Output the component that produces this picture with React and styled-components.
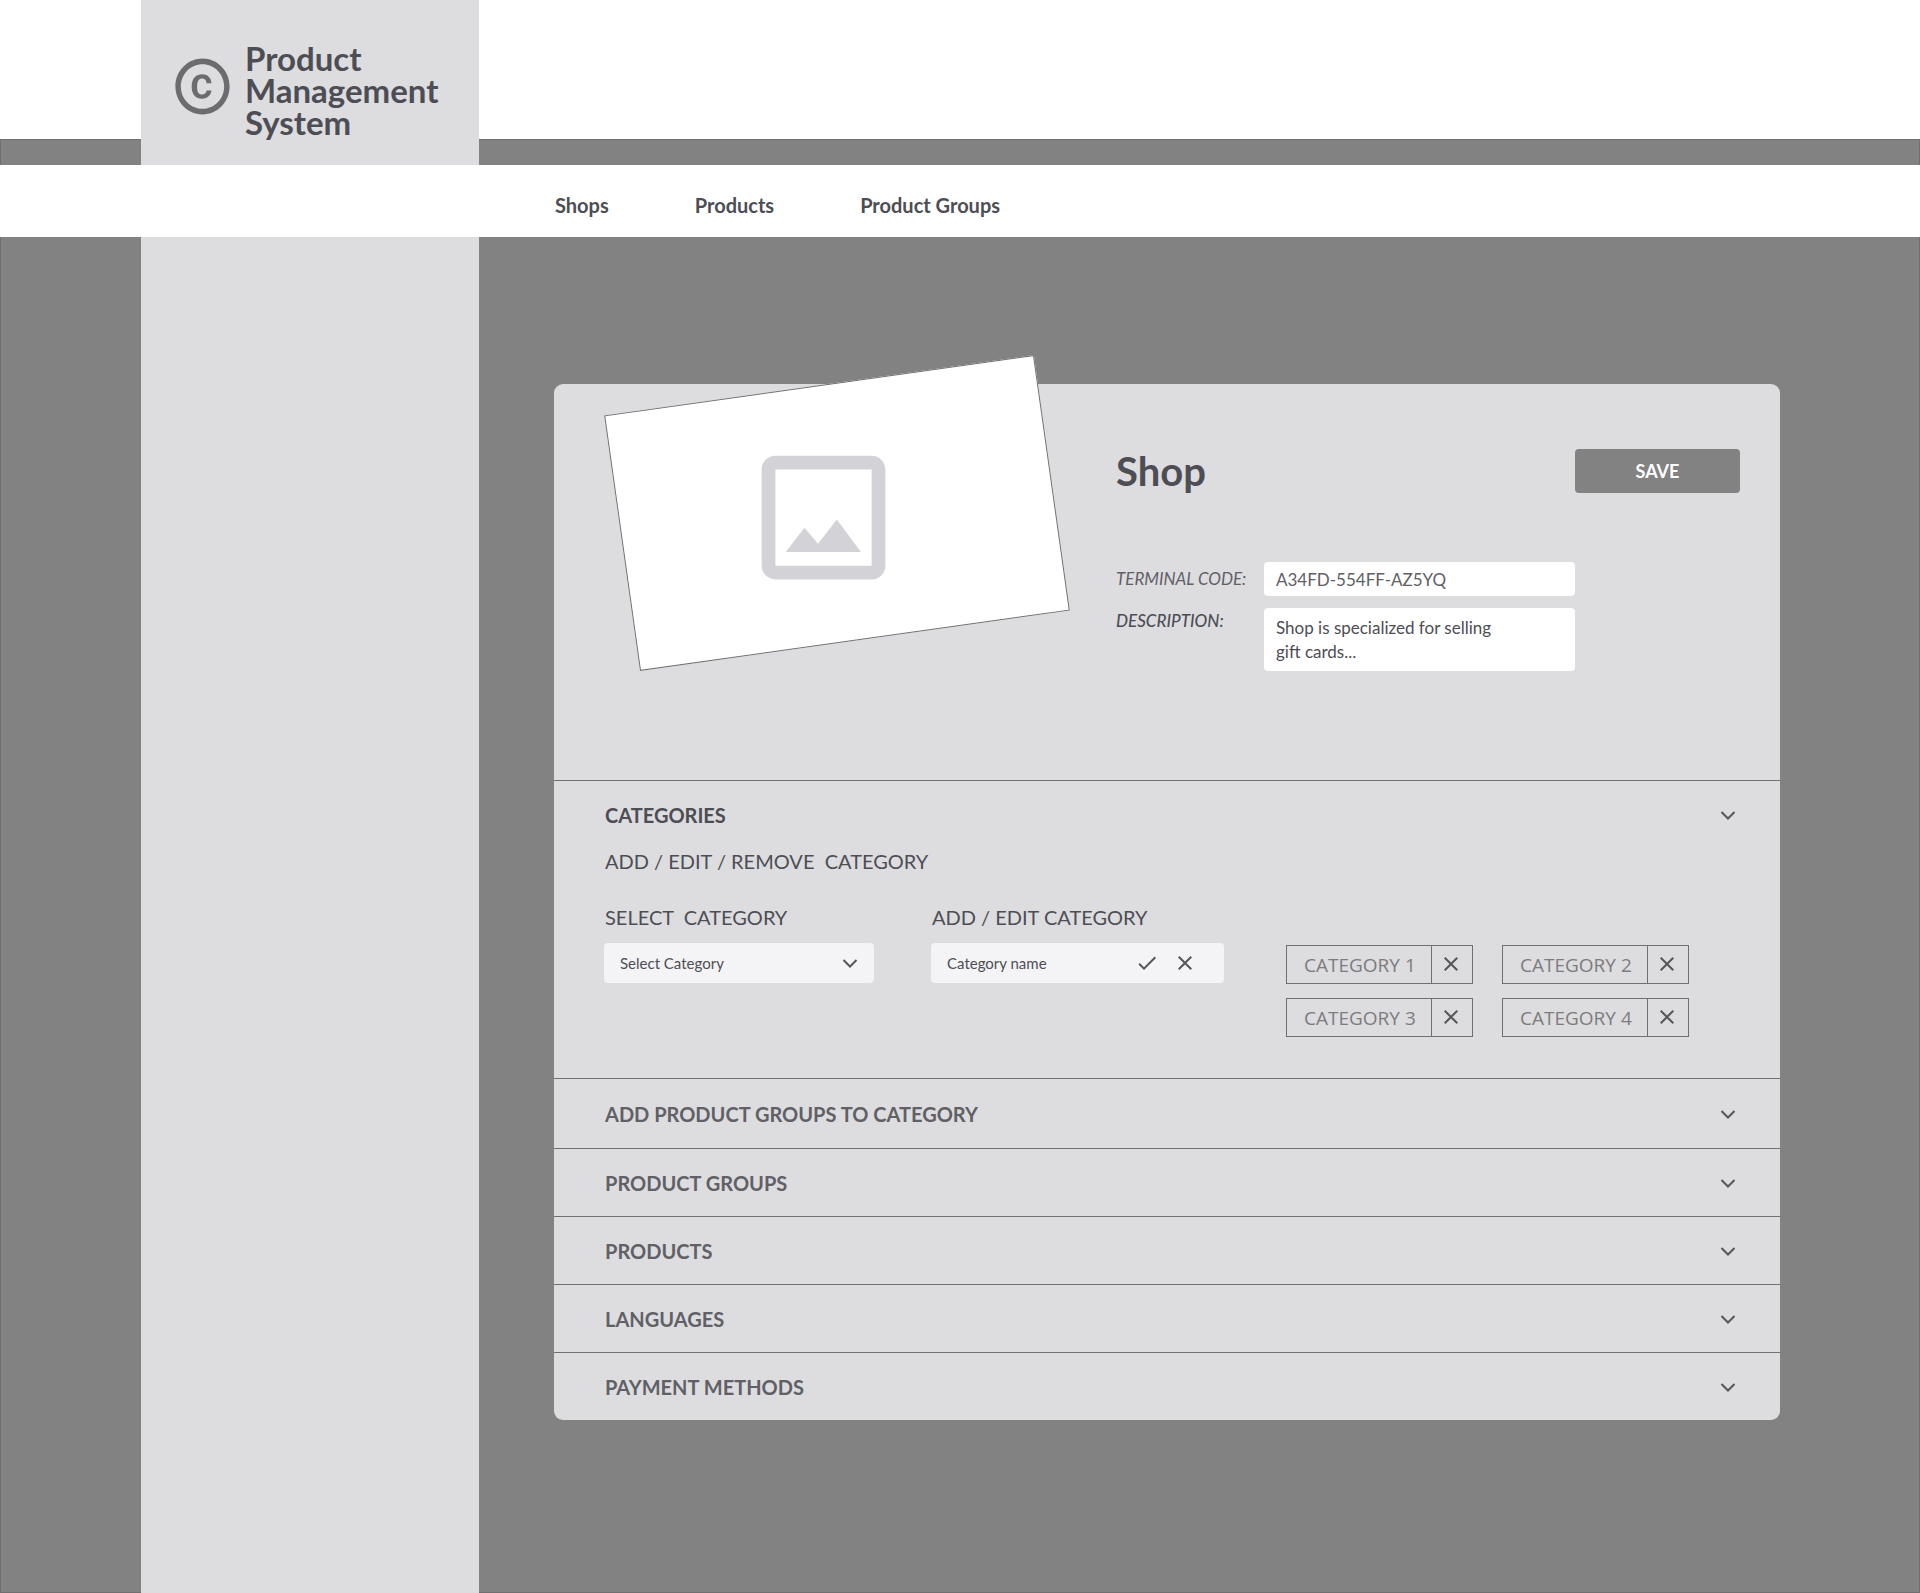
import React from "react";
import styled, { createGlobalStyle } from "styled-components";
import { MdCheck, MdClose, MdCopyright } from "react-icons/md";

const ink = "#4d4d55";
const muted = "#606066";
const line = "#707073";
const surface = "#dddddf";
const backdrop = "#828282";

const GlobalStyle = createGlobalStyle`
  *, *::before, *::after { box-sizing: border-box; }
  body {
    margin: 0;
    background: #fff;
    color: ${ink};
    font-family: Lato, "Liberation Sans", sans-serif;
  }
  button, input, textarea, select { font: inherit; color: inherit; }
  h1, h2, h3, p { margin: 0; }
`;

const Page = styled.div`
  display: grid;
  grid-template-columns: 141px 338px minmax(0, 1fr);
  grid-template-rows: 139px 26px 72px 1fr;
  min-height: 100vh;
`;

const Backdrop = styled.div`
  grid-area: 2 / 1 / 5 / 4;
  background: ${backdrop};
  border: 1px solid #707070;
`;

const Sidebar = styled.aside`
  grid-area: 1 / 2 / 5 / 3;
  background: ${surface};
  z-index: 1;
`;

const Brand = styled.a`
  display: flex;
  align-items: center;
  gap: 10px;
  padding: 42px 0 0 29px;
  color: ${ink};
  text-decoration: none;
`;

const BrandMark = styled(MdCopyright)`
  flex: none;
  width: 65px;
  height: 67px;
  margin-bottom: 8px;
  color: #6b6b70;
`;

const BrandName = styled.span`
  width: 200px;
  font-size: 33px;
  line-height: 32px;
  font-weight: 700;
`;

const NavBar = styled.nav`
  grid-area: 3 / 1 / 4 / 4;
  z-index: 2;
  display: flex;
  align-items: center;
  gap: 86px;
  padding: 8px 0 0 555px;
  background: #fff;
`;

const NavLink = styled.a`
  color: ${ink};
  font-size: 20px;
  line-height: 24px;
  font-weight: 700;
  text-decoration: none;
`;

const Main = styled.main`
  grid-area: 4 / 3 / 5 / 4;
  z-index: 1;
  padding: 147px 140px 173px 75px;
`;

const Card = styled.article`
  background: ${surface};
  border-radius: 9px;
`;

const CardHeader = styled.header`
  display: flex;
  align-items: flex-start;
  gap: 62px;
  height: 396px;
  padding: 0 40px 0 66px;
`;

const Photo = styled.div`
  flex: none;
  display: grid;
  width: 434px;
  height: 258px;
`;

const PhotoPaper = styled.div`
  grid-area: 1 / 1;
  background: #fff;
  border: 1px solid ${line};
  transform: rotate(-8deg);
`;

const PhotoIcon = styled.svg`
  grid-area: 1 / 1;
  place-self: center;
  z-index: 1;
  width: 165px;
  height: 165px;
  margin: 8px 28px 0 0;
  fill: #d3d2d7;
`;

const Details = styled.div`
  flex: 1;
  display: flex;
  flex-direction: column;
  gap: 69px;
  padding-top: 65px;
`;

const TitleRow = styled.div`
  display: flex;
  justify-content: space-between;
  align-items: center;
`;

const Title = styled.h1`
  font-size: 40px;
  line-height: 44px;
  font-weight: 700;
`;

const SaveButton = styled.button`
  width: 165px;
  height: 44px;
  border: 0;
  border-radius: 4px;
  background: ${backdrop};
  color: #fff;
  font-size: 18px;
  font-weight: 700;
`;

const Fields = styled.div`
  display: grid;
  grid-template-columns: 148px 311px;
  row-gap: 12px;
`;

const FieldLabel = styled.label`
  font-size: 17px;
  line-height: 24px;
  font-style: italic;
  font-weight: ${(p) => (p.$strong ? 500 : 400)};
  color: ${(p) => (p.$strong ? ink : muted)};
  padding-top: ${(p) => (p.$strong ? 1 : 5)}px;
`;

const CodeInput = styled.input`
  height: 34px;
  padding: 0 12px;
  border: 0;
  border-radius: 4px;
  background: #fff;
  font-size: 17px;
  color: ${muted};
`;

const DescriptionInput = styled.textarea`
  height: 63px;
  padding: 8px 48px 7px 12px;
  border: 0;
  border-radius: 4px;
  background: #fff;
  font-size: 17px;
  line-height: 24px;
  resize: none;
  overflow: hidden;
`;

const Section = styled.section`
  border-top: 1px solid ${line};
`;

const SectionHeading = styled.h2`
  font-size: 20px;
  line-height: 24px;
  font-weight: 700;
`;

const SectionToggle = styled.button`
  display: flex;
  justify-content: space-between;
  align-items: center;
  width: 100%;
  height: ${(p) => (p.$tall ? 69 : 67)}px;
  padding: 0 38px 0 51px;
  border: 0;
  background: none;
  text-align: left;
  color: ${(p) => (p.$open ? ink : muted)};
`;

const ChevronIcon = styled.svg`
  flex: none;
  width: 28px;
  height: 28px;
  fill: none;
  stroke: #55555c;
  stroke-width: 2;
`;

const CategoryPanel = styled.div`
  display: flex;
  flex-direction: column;
  gap: 32px;
  padding: 1px 0 41px 50px;
`;

const SubHeading = styled.h3`
  padding-left: 1px;
  font-size: 20px;
  line-height: 24px;
  font-weight: 400;
  white-space: pre;
`;

const CategoryTools = styled.div`
  display: flex;
  align-items: flex-start;
`;

const Tool = styled.div`
  display: flex;
  flex-direction: column;
  gap: 14px;
  width: ${(p) => p.$width}px;
  margin-right: ${(p) => p.$after}px;
`;

const ToolLabel = styled.label`
  padding-left: 1px;
  font-size: 20px;
  line-height: 24px;
  white-space: pre;
`;

const ControlBox = styled.div`
  display: grid;
  grid-template-columns: minmax(0, 1fr) auto;
  align-items: center;
  height: 40px;
  border-radius: 4px;
  background: #f4f4f6;
`;

const CategorySelect = styled.select`
  grid-area: 1 / 1 / 2 / 3;
  width: 100%;
  height: 40px;
  padding: 0 40px 0 16px;
  border: 0;
  background: transparent;
  appearance: none;
  font-size: 15px;
`;

const SelectChevron = styled.span`
  grid-area: 1 / 2;
  display: grid;
  margin-right: 10px;
  pointer-events: none;
`;

const NameInput = styled.input`
  width: 100%;
  height: 40px;
  padding: 0 0 0 16px;
  border: 0;
  background: transparent;
  font-size: 15px;
  &::placeholder { color: ${ink}; opacity: 1; }
`;

const BoxActions = styled.div`
  display: flex;
  gap: 14px;
  padding-right: 27px;
`;

const IconButton = styled.button`
  display: grid;
  place-items: center;
  width: 24px;
  height: 24px;
  padding: 0;
  border: 0;
  background: none;
  color: #55555c;
`;

const TagList = styled.ul`
  display: grid;
  grid-template-columns: 187px 187px;
  gap: 14px 29px;
  margin: 40px 0 0;
  padding: 0;
  list-style: none;
`;

const Tag = styled.li`
  display: grid;
  grid-template-columns: 1fr 41px;
  height: 39px;
  border: 1px solid ${line};
  font-family: "Open Sans", "Noto Sans", sans-serif;
  font-size: 19px;
  color: #7c7c7e;
`;

const TagName = styled.span`
  display: flex;
  align-items: center;
  padding-left: 17px;
`;

const TagRemove = styled.button`
  display: grid;
  place-items: center;
  padding: 0 2px 1px 0;
  border: 0;
  border-left: 1px solid ${line};
  background: none;
  color: #55555c;
`;

const links = ["Shops", "Products", "Product Groups"];
const categories = ["CATEGORY 1", "CATEGORY 2", "CATEGORY 3", "CATEGORY 4"];
const sections = [
  { title: "ADD PRODUCT GROUPS TO CATEGORY", tall: true },
  { title: "PRODUCT GROUPS" },
  { title: "PRODUCTS" },
  { title: "LANGUAGES" },
  { title: "PAYMENT METHODS" },
];

function Chevron() {
  return (
    <ChevronIcon viewBox="0 0 28 28" aria-hidden="true">
      <path d="M7.5 11L14 17.5L20.5 11" />
    </ChevronIcon>
  );
}

export default function App() {
  return (
    <>
      <GlobalStyle />
      <Page>
        <Backdrop />
        <Sidebar>
          <Brand href="#home">
            <BrandMark preserveAspectRatio="none" aria-hidden="true" />
            <BrandName>Product Management System</BrandName>
          </Brand>
        </Sidebar>
        <NavBar>
          {links.map((name) => (
            <NavLink key={name} href="#">{name}</NavLink>
          ))}
        </NavBar>
        <Main>
          <Card>
            <CardHeader>
              <Photo>
                <PhotoPaper />
                <PhotoIcon viewBox="0 0 24 24" aria-hidden="true">
                  <path d="M19 5v14H5V5h14m0-2H5c-1.1 0-2 .9-2 2v14c0 1.1.9 2 2 2h14c1.1 0 2-.9 2-2V5c0-1.1-.9-2-2-2z" />
                  <path d="M13.94 12.29L11.2 15.8 9.24 13.5 6.5 17h10.95z" />
                </PhotoIcon>
              </Photo>
              <Details>
                <TitleRow>
                  <Title>Shop</Title>
                  <SaveButton type="button">SAVE</SaveButton>
                </TitleRow>
                <Fields>
                  <FieldLabel htmlFor="code">TERMINAL CODE:</FieldLabel>
                  <CodeInput id="code" defaultValue="A34FD-554FF-AZ5YQ" />
                  <FieldLabel htmlFor="description" $strong>DESCRIPTION:</FieldLabel>
                  <DescriptionInput
                    id="description"
                    defaultValue={"Shop is specialized for selling\ngift cards..."}
                  />
                </Fields>
              </Details>
            </CardHeader>

            <Section>
              <SectionToggle type="button" $open aria-expanded="true">
                <SectionHeading as="span">CATEGORIES</SectionHeading>
                <Chevron />
              </SectionToggle>
              <CategoryPanel>
                <SubHeading>{"ADD / EDIT / REMOVE  CATEGORY"}</SubHeading>
                <CategoryTools>
                  <Tool $width={270} $after={57}>
                    <ToolLabel htmlFor="select-category">{"SELECT  CATEGORY"}</ToolLabel>
                    <ControlBox>
                      <CategorySelect id="select-category">
                        <option>Select Category</option>
                        {categories.map((name) => (
                          <option key={name}>{name}</option>
                        ))}
                      </CategorySelect>
                      <SelectChevron><Chevron /></SelectChevron>
                    </ControlBox>
                  </Tool>
                  <Tool $width={293} $after={62}>
                    <ToolLabel htmlFor="category-name">ADD / EDIT CATEGORY</ToolLabel>
                    <ControlBox>
                      <NameInput id="category-name" placeholder="Category name" />
                      <BoxActions>
                        <IconButton type="button" aria-label="Confirm"><MdCheck size={24} /></IconButton>
                        <IconButton type="button" aria-label="Cancel"><MdClose size={24} /></IconButton>
                      </BoxActions>
                    </ControlBox>
                  </Tool>
                  <TagList>
                    {categories.map((name) => (
                      <Tag key={name}>
                        <TagName>{name}</TagName>
                        <TagRemove type="button" aria-label={`Remove ${name}`}>
                          <MdClose size={24} />
                        </TagRemove>
                      </Tag>
                    ))}
                  </TagList>
                </CategoryTools>
              </CategoryPanel>
            </Section>

            {sections.map(({ title, tall }) => (
              <Section key={title}>
                <SectionToggle type="button" $tall={tall} aria-expanded="false">
                  <SectionHeading as="span">{title}</SectionHeading>
                  <Chevron />
                </SectionToggle>
              </Section>
            ))}
          </Card>
        </Main>
      </Page>
    </>
  );
}
